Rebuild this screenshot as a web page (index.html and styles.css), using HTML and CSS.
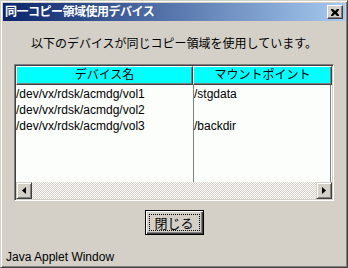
FILE: index.html
```html
<!DOCTYPE html>
<html lang="ja">
<head>
    <meta charset="UTF-8">
    <title>同一コピー領域使用デバイス</title>
    <link rel="stylesheet" href="styles.css">
</head>
<body>
    <div class="window">
        <div class="titlebar">
            <span class="title">同一コピー領域使用デバイス</span>
            <span class="close-btn">
                <svg width="8" height="7" viewBox="0 0 8 7">
                    <path d="M0 0h2l2 2 2-2h2v1l-2 2.5 2 2.5v1h-2l-2-2-2 2h-2v-1l2-2.5-2-2.5z" fill="#000"/>
                </svg>
            </span>
        </div>

        <div class="content">
            <div class="message">以下のデバイスが同じコピー領域を使用しています。</div>

            <div class="table">
                <div class="table-head">
                    <div class="th col-dev">デバイス名</div>
                    <div class="th col-mnt">マウントポイント</div>
                </div>
                <div class="table-body">
                    <div class="col col-dev">
                        <div class="cell">/dev/vx/rdsk/acmdg/vol1</div>
                        <div class="cell">/dev/vx/rdsk/acmdg/vol2</div>
                        <div class="cell">/dev/vx/rdsk/acmdg/vol3</div>
                    </div>
                    <div class="col col-mnt">
                        <div class="cell">/stgdata</div>
                        <div class="cell"></div>
                        <div class="cell">/backdir</div>
                    </div>
                </div>
                <div class="hscroll">
                    <span class="scroll-btn">
                        <svg width="4" height="7" viewBox="0 0 4 7"><path d="M4 0v7L0 3.5z" fill="#000"/></svg>
                    </span>
                    <span class="scroll-track"></span>
                    <span class="scroll-btn">
                        <svg width="4" height="7" viewBox="0 0 4 7"><path d="M0 0v7l4-3.5z" fill="#000"/></svg>
                    </span>
                </div>
            </div>

            <div class="actions">
                <button class="btn-close">閉じる</button>
            </div>

            <div class="footer">Java Applet Window</div>
        </div>
    </div>
</body>
</html>
```

FILE: styles.css
```css
body {
    margin: 0;
    font-family: "Liberation Sans", "Noto Sans CJK JP", sans-serif;
    font-size: 12px;
    color: #000;
    background: #d4d0c8;
}

.window {
    width: 348px;
    height: 268px;
    box-sizing: border-box;
    padding: 2px;
    border: 1px solid;
    border-color: #d4d0c8 #404040 #404040 #d4d0c8;
    box-shadow: inset 1px 1px #fff, inset -1px -1px #808080;
    background: #d4d0c8;
    display: flex;
    flex-direction: column;
    overflow: hidden;
}

.titlebar {
    height: 18px;
    flex-shrink: 0;
    display: flex;
    align-items: center;
    justify-content: space-between;
    padding: 0 2px 0 2px;
    background: linear-gradient(to right, #0a246a, #a6caf0);
}

.title {
    color: #fff;
    font-weight: bold;
    font-size: 12px;
    line-height: 18px;
    letter-spacing: -0.5px;
}

.close-btn {
    width: 16px;
    height: 14px;
    box-sizing: border-box;
    display: flex;
    align-items: center;
    justify-content: center;
    background: #d4d0c8;
    border: 1px solid;
    border-color: #fff #404040 #404040 #fff;
    box-shadow: inset -1px -1px #808080;
}

.content {
    flex: 1;
    display: flex;
    flex-direction: column;
}

.message {
    margin-top: 15px;
    line-height: 16px;
    text-align: center;
}

.table {
    margin: 12px 11px 0 11px;
    height: 137px;
    box-sizing: border-box;
    border: 1px solid;
    border-color: #808080 #fff #fff #808080;
    box-shadow: inset 1px 1px #404040, inset -1px -1px #d4d0c8;
    padding: 1px;
    display: flex;
    flex-direction: column;
    background: #fbfefb;
}

.table-head {
    display: flex;
    height: 19px;
    flex-shrink: 0;
}

.th {
    box-sizing: border-box;
    background: #00ffff;
    border: 1px solid;
    border-color: #fff #404040 #404040 #fff;
    box-shadow: inset -1px -1px #808080;
    text-align: center;
    line-height: 16px;
}

.col-dev {
    width: 177px;
}

.col-mnt {
    flex: 1;
}

.table-body {
    flex: 1;
    display: flex;
}

.col {
    padding-top: 1px;
}

.table-body .col-dev {
    border-right: 1px solid #808080;
}

.table-body .col-mnt {
    margin-right: 1px;
    border-right: 1px solid #808080;
}

.cell {
    height: 16px;
    line-height: 16px;
    white-space: nowrap;
}

.hscroll {
    height: 17px;
    flex-shrink: 0;
    display: flex;
}

.scroll-btn {
    width: 16px;
    box-sizing: border-box;
    display: flex;
    align-items: center;
    justify-content: center;
    background: #d4d0c8;
    border: 1px solid;
    border-color: #d4d0c8 #404040 #404040 #d4d0c8;
    box-shadow: inset 1px 1px #fff, inset -1px -1px #808080;
}

.scroll-track {
    flex: 1;
    background: repeating-conic-gradient(#d4d0c8 0 25%, #fff 0 50%) 0 0 / 2px 2px;
}

.actions {
    margin-top: 9px;
    display: flex;
    justify-content: center;
}

.btn-close {
    width: 59px;
    height: 25px;
    padding: 0;
    font-family: "Noto Sans CJK JP", sans-serif;
    font-size: 13px;
    background: #d4d0c8;
    border: 1px solid #000;
    box-shadow: inset 1px 1px #fff, inset -1px -1px #404040, inset -2px -2px #808080;
    outline: 1px dotted #000;
    outline-offset: -5px;
}

.footer {
    margin-top: 14px;
    padding-left: 3px;
    line-height: 16px;
}
```
